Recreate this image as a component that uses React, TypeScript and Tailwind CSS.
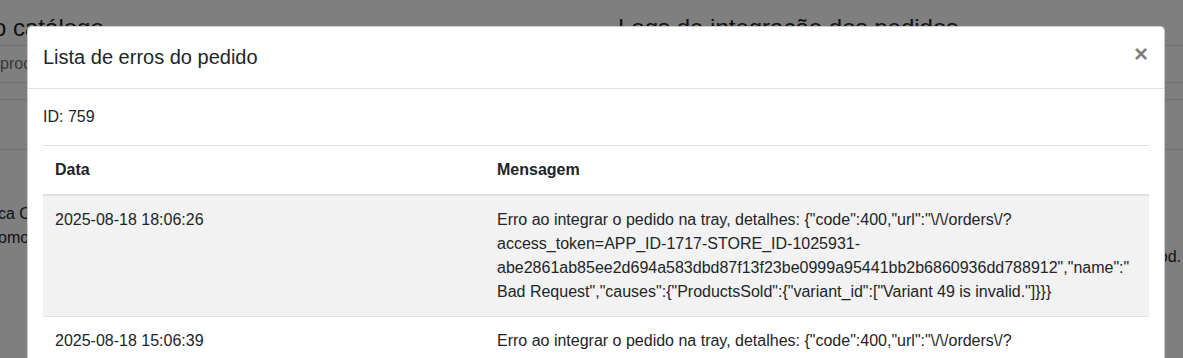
import React from "react";

type LogRow = {
  date: string;
  message: string;
};

const errorDetail =
  '{"code":400,"url":"\\/\\/orders\\/?access_token=APP_ID-1717-STORE_ID-1025931-abe2861ab85ee2d694a583dbd87f13f23be0999a95441bb2b6860936dd788912","name":"Bad Request","causes":{"ProductsSold":{"variant_id":["Variant 49 is invalid."]}}}';

const rows: LogRow[] = [
  {
    date: "2025-08-18 18:06:26",
    message: "Erro ao integrar o pedido na tray, detalhes: " + errorDetail,
  },
  {
    date: "2025-08-18 15:06:39",
    message: "Erro ao integrar o pedido na tray, detalhes: " + errorDetail,
  },
];

const BackgroundPage: React.FC = () => {
  return (
    <div className="w-full h-full bg-white text-[#212529]">
      <div className="flex h-[46px] border-b border-[#dee2e6]">
        <div className="w-[625px] pt-[14px] -ml-[7px]">
          <h4 className="text-[24px] leading-[28px]">o catálogo</h4>
        </div>
        <div className="pt-[14px]">
          <h4 className="text-[24px] leading-[28px]">
            Logs de integração dos pedidos
          </h4>
        </div>
      </div>
      <div className="h-[37px] border-b border-[#dee2e6] flex items-center">
        <span className="text-[#6c757d] text-[16px]">produto</span>
      </div>
      <div className="h-[17px] border-b border-[#dee2e6]" />
      <div className="h-[50px] border-b border-[#dee2e6]" />
      <div className="flex justify-between pt-[52px]">
        <div className="text-[16px] leading-[24px] -ml-[2px]">
          <p>ca Cadastro</p>
          <p>omo exemplo</p>
        </div>
        <div className="text-[16px] leading-[24px] pt-[43px] pr-[2px]">
          <p>od.</p>
        </div>
      </div>
    </div>
  );
};

const App: React.FC = () => {
  return (
    <div
      className="relative w-[1183px] h-[358px] overflow-hidden"
      style={{ fontFamily: '"Liberation Sans", Arial, sans-serif' }}
    >
      <BackgroundPage />
      <div className="absolute inset-0 bg-black/50" />
      <div className="absolute left-[27px] top-[26px] w-[1138px] bg-white border border-black/20 rounded-[5px] text-[#212529]">
        <div className="flex items-start justify-between px-[15px] pt-[15px] pb-[16px] border-b border-[#dee2e6]">
          <h5 className="text-[20px] leading-[30px]">Lista de erros do pedido</h5>
          <button className="text-[24px] leading-[30px] font-bold text-black opacity-50 -mt-[3px] mr-[1px]">
            ×
          </button>
        </div>
        <div className="px-[15px] py-[16px] text-[16px] leading-[24px]">
          <p className="mb-[16px]">ID: 759</p>
          <table className="w-full table-fixed border-collapse">
            <thead>
              <tr>
                <th className="w-[442px] text-left font-bold p-[12px] border-t border-[#dee2e6] border-b-2">
                  Data
                </th>
                <th className="text-left font-bold p-[12px] border-t border-[#dee2e6] border-b-2">
                  Mensagem
                </th>
              </tr>
            </thead>
            <tbody>
              {rows.map((row, index) => (
                <tr
                  key={index}
                  className={index % 2 === 0 ? "bg-[#f2f2f2]" : ""}
                >
                  <td className="align-top p-[12px] border-t border-[#dee2e6]">
                    {row.date}
                  </td>
                  <td className="align-top p-[12px] border-t border-[#dee2e6] break-words">
                    {row.message}
                  </td>
                </tr>
              ))}
            </tbody>
          </table>
        </div>
      </div>
    </div>
  );
};

export default App;
